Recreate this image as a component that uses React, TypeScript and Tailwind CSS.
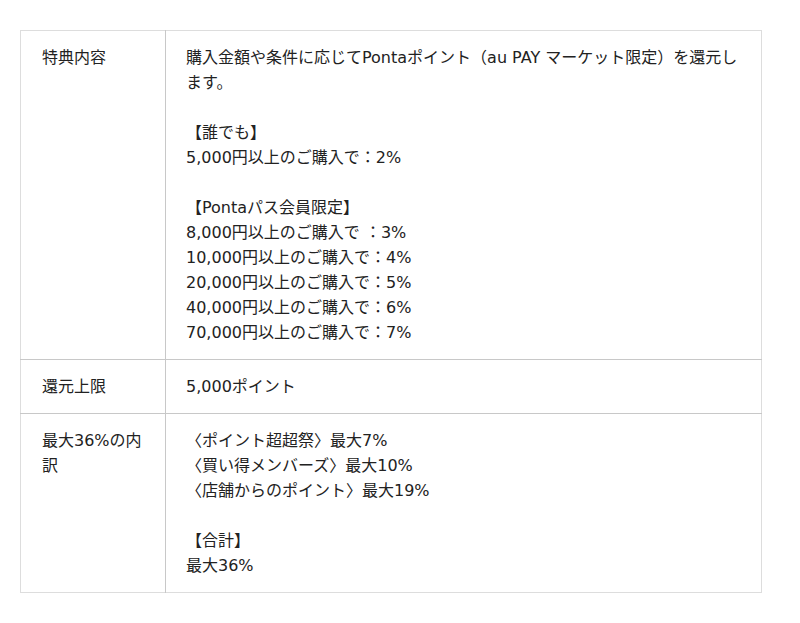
export default function App() {
  const rows: { label: string; lines: string[] }[] = [
    {
      label: "特典内容",
      lines: [
        "購入金額や条件に応じてPontaポイント（au PAY マーケット限定）を還元します。",
        "",
        "【誰でも】",
        "5,000円以上のご購入で：2%",
        "",
        "【Pontaパス会員限定】",
        "8,000円以上のご購入で ：3%",
        "10,000円以上のご購入で：4%",
        "20,000円以上のご購入で：5%",
        "40,000円以上のご購入で：6%",
        "70,000円以上のご購入で：7%",
      ],
    },
    { label: "還元上限", lines: ["5,000ポイント"] },
    {
      label: "最大36%の内訳",
      lines: [
        "〈ポイント超超祭〉最大7%",
        "〈買い得メンバーズ〉最大10%",
        "〈店舗からのポイント〉最大19%",
        "",
        "【合計】",
        "最大36%",
      ],
    },
  ];

  return (
    <div className="min-h-screen bg-white px-5 pt-[30px] font-['DejaVu_Sans','Noto_Sans_CJK_JP',sans-serif] text-[16px] leading-[25px] text-[#222]">
      <table className="w-[742px] border-collapse border border-[#ddd]">
        <tbody>
          {rows.map((row, i) => (
            <tr key={i} className={i > 0 ? "border-t border-[#c8c8c8]" : ""}>
              <td className="w-[145px] border-r border-[#c8c8c8] px-[21px] py-[14px] align-top">
                {row.label}
              </td>
              <td className="px-5 py-[14px] align-top">
                {row.lines.map((line, j) => (
                  <div key={j} className="min-h-[25px]">
                    {line}
                  </div>
                ))}
              </td>
            </tr>
          ))}
        </tbody>
      </table>
    </div>
  );
}
